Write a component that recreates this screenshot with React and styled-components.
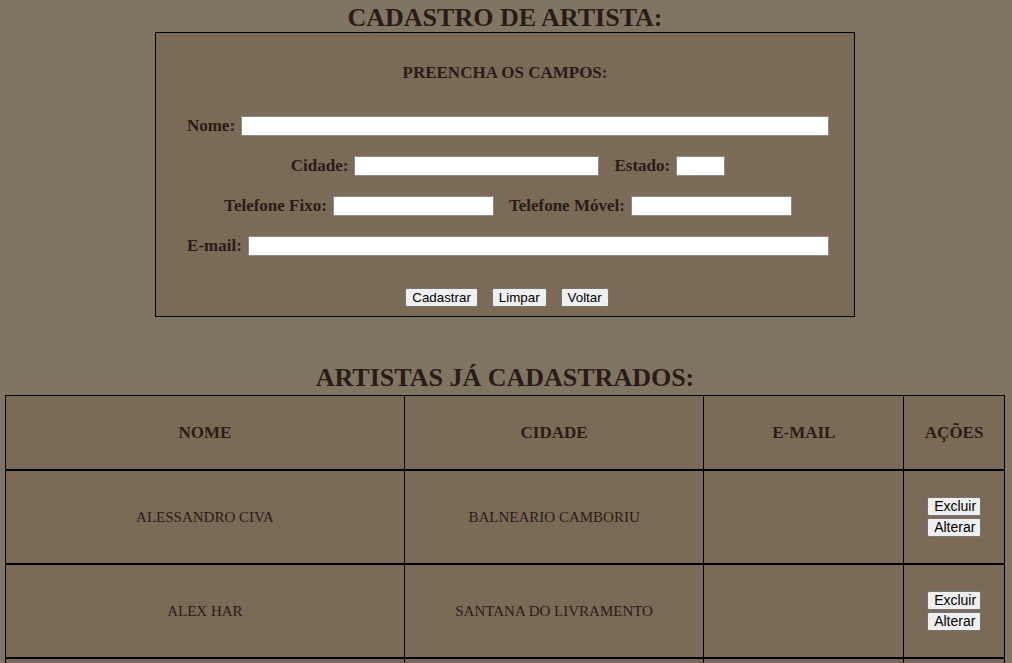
import React from "react";
import styled, { createGlobalStyle } from "styled-components";

const Global = createGlobalStyle`
  html, body { margin: 0; padding: 0; background: #807562; }
  body { font-family: "Liberation Serif", "Times New Roman", serif; color: #2b1b17; }
`;

const Page = styled.div`
  display: flex;
  flex-direction: column;
  align-items: center;
  padding-right: 2px;
`;

const Title = styled.h1`
  margin: 0;
  height: 32px;
  line-height: 35px;
  font-size: 26px;
  font-weight: bold;
  text-align: center;
  color: #2b1b17;
`;

const FormBox = styled.form`
  box-sizing: border-box;
  width: 700px;
  height: 285px;
  border: 1px solid #000;
  background: #7a6a56;
  display: flex;
  flex-direction: column;
  align-items: center;
  padding-top: 30px;
`;

const Subtitle = styled.h2`
  margin: 0 0 33px 0;
  height: 20px;
  line-height: 20px;
  font-size: 17px;
  font-weight: bold;
`;

const Row = styled.div`
  display: flex;
  align-items: center;
  justify-content: center;
  gap: 15px;
  height: 20px;
  margin-bottom: 20px;
  padding-left: 6px;
`;

const Field = styled.label`
  display: flex;
  align-items: center;
  gap: 6px;
  font-size: 17px;
  font-weight: bold;
  white-space: nowrap;
`;

const Input = styled.input`
  box-sizing: border-box;
  width: ${(p) => p.$w}px;
  height: 20px;
  border: 1px solid #8a8a8a;
  background: #fff;
  margin: 0;
  padding: 0 2px;
`;

const Buttons = styled.div`
  display: flex;
  justify-content: center;
  gap: 14px;
  margin-top: 12px;
  padding-left: 4px;
`;

const Btn = styled.button`
  box-sizing: border-box;
  font-family: "Liberation Sans", Arial, sans-serif;
  font-size: ${(p) => p.$fs || 13.33}px;
  height: 19px;
  width: ${(p) => (p.$w ? `${p.$w}px` : "auto")};
  padding: 0 6px;
  background: #efefef;
  color: #000;
  border: 1px solid #767676;
  border-radius: 2px;
  line-height: 17px;
`;

const Title2 = styled(Title)`
  margin-top: 46px;
  height: 30px;
  line-height: 30px;
  margin-bottom: 2px;
`;

const Table = styled.table`
  width: 1000px;
  border-collapse: collapse;
  background: #7a6a56;
`;

const Th = styled.th`
  border: 1px solid #000;
  border-bottom: 2px solid #000;
  height: 73px;
  font-size: 17px;
  font-weight: bold;
  width: ${(p) => p.$w}px;
  padding: 0;
`;

const Td = styled.td`
  border: 1px solid #000;
  border-bottom: 2px solid #000;
  height: 92px;
  text-align: center;
  font-size: 15px;
  padding: 0;
`;

const Actions = styled.div`
  display: flex;
  flex-direction: column;
  align-items: center;
  gap: 2px;
`;

const rows = [
  { nome: "ALESSANDRO CIVA", cidade: "BALNEARIO CAMBORIU", email: "" },
  { nome: "ALEX HAR", cidade: "SANTANA DO LIVRAMENTO", email: "" },
];

export default function App() {
  return (
    <Page>
      <Global />
      <Title>CADASTRO DE ARTISTA:</Title>
      <FormBox onSubmit={(e) => e.preventDefault()}>
        <Subtitle>PREENCHA OS CAMPOS:</Subtitle>
        <Row>
          <Field>Nome: <Input $w={588} /></Field>
        </Row>
        <Row>
          <Field>Cidade: <Input $w={245} /></Field>
          <Field>Estado: <Input $w={49} /></Field>
        </Row>
        <Row>
          <Field>Telefone Fixo: <Input $w={161} /></Field>
          <Field>Telefone Móvel: <Input $w={161} /></Field>
        </Row>
        <Row>
          <Field>E-mail: <Input $w={581} /></Field>
        </Row>
        <Buttons>
          <Btn type="button">Cadastrar</Btn>
          <Btn type="button">Limpar</Btn>
          <Btn type="button">Voltar</Btn>
        </Buttons>
      </FormBox>
      <Title2>ARTISTAS JÁ CADASTRADOS:</Title2>
      <Table>
        <thead>
          <tr>
            <Th $w={400}>NOME</Th>
            <Th $w={300}>CIDADE</Th>
            <Th $w={200}>E-MAIL</Th>
            <Th $w={100}>AÇÕES</Th>
          </tr>
        </thead>
        <tbody>
          {rows.map((r, i) => (
            <tr key={i}>
              <Td>{r.nome}</Td>
              <Td>{r.cidade}</Td>
              <Td>{r.email}</Td>
              <Td>
                <Actions>
                  <Btn type="button" $fs={14} $w={54}>Excluir</Btn>
                  <Btn type="button" $fs={14} $w={54}>Alterar</Btn>
                </Actions>
              </Td>
            </tr>
          ))}
          <tr>
            <Td />
            <Td />
            <Td />
            <Td />
          </tr>
        </tbody>
      </Table>
    </Page>
  );
}
